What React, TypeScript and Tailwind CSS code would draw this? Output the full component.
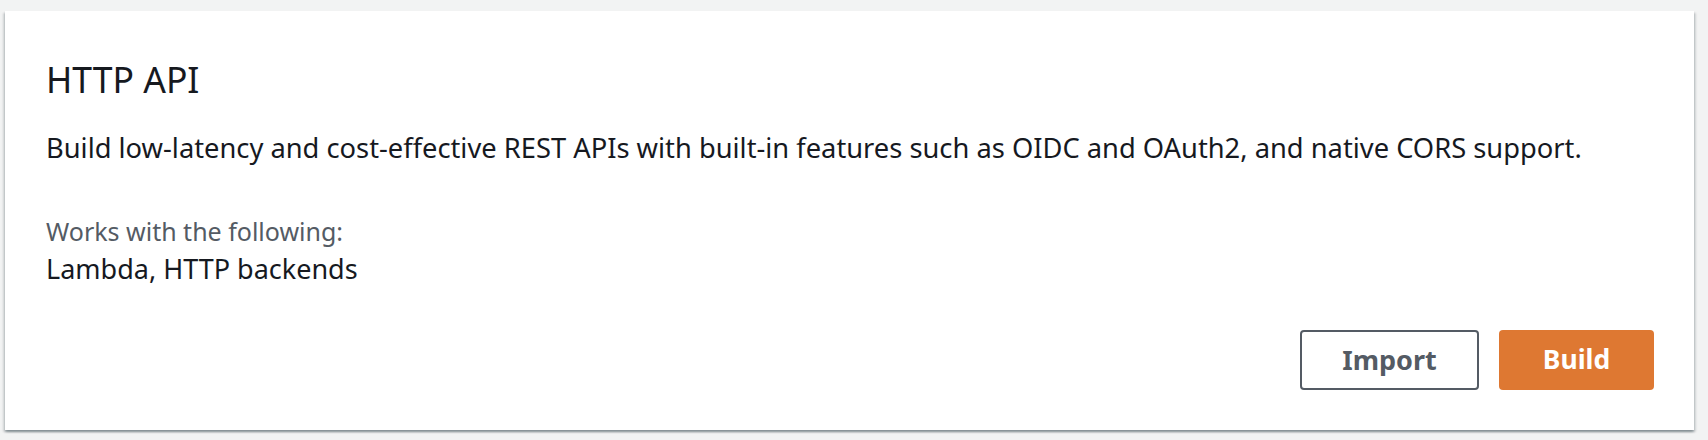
import React from 'react'
import type { FC } from 'react'

const ApiTypeCard: FC = () => {
  return (
    <div className="ml-[5px] mt-[11px] flex h-[419px] w-[1689px] flex-col bg-white pl-[41px] pr-[40px] pt-[47px] pb-[40px] shadow-[0_2px_2px_0_rgba(0,28,36,0.3),2px_2px_2px_0_rgba(0,28,36,0.12),-2px_2px_2px_0_rgba(0,28,36,0.12)]">
      <h2 className="text-[35.5px] leading-[43px] font-normal text-[#16191f]">HTTP API</h2>
      <p className="mt-[28px] text-[27.3px] leading-[38.5px] text-[#16191f]">
        Build low-latency and cost-effective REST APIs with built-in features such as OIDC and OAuth2, and native CORS
        support.
      </p>
      <div className="mt-[44px] leading-[38.5px]">
        <div className="text-[25px] text-[#545b64]">Works with the following:</div>
        <div className="text-[27px] text-[#16191f]">Lambda, HTTP backends</div>
      </div>
      <div className="mt-auto flex justify-end gap-[20px]">
        <button className="flex h-[60px] w-[179px] items-center justify-center rounded-[4px] border-2 border-[#545b64] bg-white text-[27px] font-bold text-[#545b64]">
          Import
        </button>
        <button className="flex h-[60px] w-[155px] items-center justify-center rounded-[4px] bg-[#de7832] text-[26.5px] font-bold text-white">
          Build
        </button>
      </div>
    </div>
  )
}

export default function App() {
  return (
    <div className="h-[440px] w-[1708px] overflow-hidden bg-[#f2f3f3] font-['Noto_Sans',sans-serif]">
      <ApiTypeCard />
    </div>
  )
}
